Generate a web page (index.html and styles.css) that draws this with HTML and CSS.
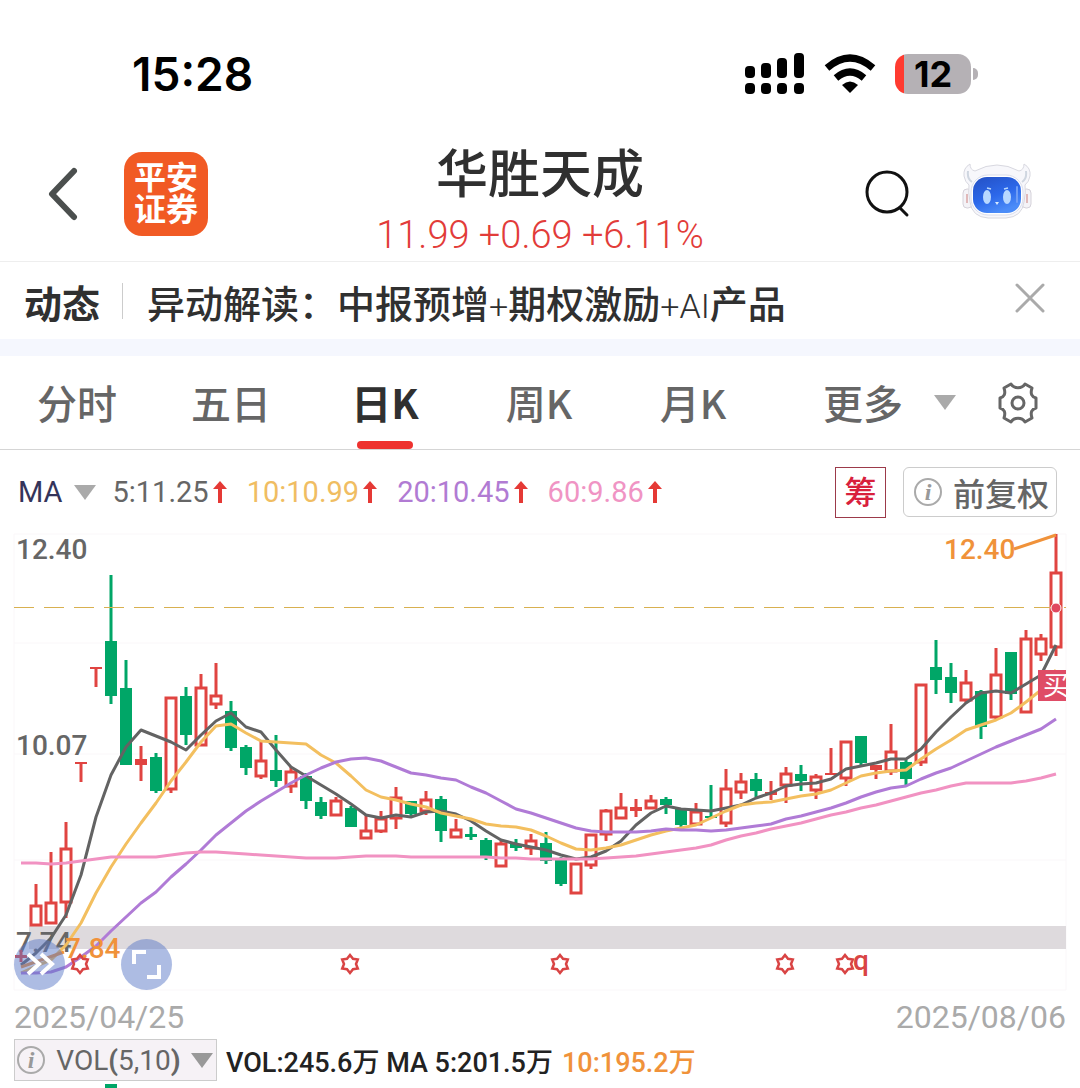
FILE: index.html
```html
<!DOCTYPE html>
<html lang="zh-CN">
<head>
  <meta charset="utf-8">
  <meta name="viewport" content="width=device-width, initial-scale=1">
  <title>华胜天成</title>
  <link rel="stylesheet" href="styles.css">
</head>
<body>
  <!-- Status bar -->
  <div class="status">
    <span class="time">15:28</span>
    <div class="status-icons">
      <svg class="signal" width="60" height="42" viewBox="0 0 60 42">
        <rect x="0" y="13" width="10" height="12" rx="4"/>
        <rect x="16" y="10" width="10" height="15" rx="4"/>
        <rect x="32" y="5" width="10" height="20" rx="4"/>
        <rect x="49" y="0" width="10" height="25" rx="4"/>
        <rect x="0" y="30" width="10" height="11" rx="4"/>
        <rect x="16" y="30" width="10" height="11" rx="4"/>
        <rect x="32" y="30" width="10" height="11" rx="4"/>
        <rect x="49" y="30" width="10" height="11" rx="4"/>
      </svg>
      <svg class="wifi" width="52" height="40" viewBox="0 0 52 40">
        <path d="M3 14Q26 -6 49 14" fill="none" stroke="#000" stroke-width="7"/>
        <path d="M12 24Q26 12 40 24" fill="none" stroke="#000" stroke-width="7"/>
        <path d="M18 31Q26 24 34 31L26 39Z"/>
      </svg>
      <div class="battery"><span>12</span></div>
    </div>
  </div>

  <!-- Header -->
  <header class="header">
    <div class="header-left">
      <button class="icon-btn" aria-label="返回">
        <svg width="30" height="54" viewBox="0 0 30 54"><path d="M26 4L4 27L26 50" fill="none" stroke="#4b4f4e" stroke-width="6" stroke-linecap="round" stroke-linejoin="round"/></svg>
      </button>
      <div class="logo"><span>平安</span><span>证券</span></div>
    </div>
    <div class="stock">
      <h1>华胜天成</h1>
      <p>11.99 +0.69 +6.11%</p>
    </div>
    <div class="header-right">
      <button class="icon-btn" aria-label="搜索">
        <svg width="46" height="50" viewBox="0 0 46 50"><circle cx="23" cy="23" r="20" fill="none" stroke="#111" stroke-width="3"/><path d="M36 39L43 46" stroke="#111" stroke-width="3" stroke-linecap="round"/></svg>
      </button>
      <button class="icon-btn robot" aria-label="智能助手">
        <svg width="70" height="58" viewBox="0 0 70 58">
          <defs>
            <linearGradient id="face" x1="0" y1="0" x2="0.5" y2="1"><stop offset="0" stop-color="#2450c4"/><stop offset="0.6" stop-color="#2c68ea"/><stop offset="1" stop-color="#4b8cf8"/></linearGradient>
          </defs>
          <rect x="1" y="27" width="9" height="19" rx="4" fill="#f4f3f7" stroke="#d5d2da"/>
          <rect x="60" y="27" width="9" height="19" rx="4" fill="#f4f3f7" stroke="#d5d2da"/>
          <path d="M5 32V41M65 32V41" stroke="#d9a5a5" stroke-width="1.5"/>
          <path d="M13 9Q8 8 8 2Q1 6 2 14Q3 20 7 23Q6 30 8 40Q10 55 26 56H44Q60 55 62 40Q64 30 63 23Q67 20 68 14Q69 6 62 2Q62 8 57 9Q35 -3 13 9Z" fill="#f7f7fb" stroke="#d8d8e0"/>
          <path d="M6 9Q5 17 10 20M64 9Q65 17 60 20" fill="none" stroke="#cfd6e0" stroke-width="2"/>
          <rect x="9" y="13" width="52" height="40" rx="17" fill="#fff" stroke="#d9dceb"/>
          <rect x="11" y="15" width="48" height="36" rx="14" fill="url(#face)"/>
          <ellipse cx="25" cy="35" rx="4" ry="7" fill="#b8d8ff"/>
          <ellipse cx="45" cy="35" rx="4" ry="7" fill="#b8d8ff"/>
          <path d="M25 26L29 27M42 27L46 26" stroke="#b8d8ff" stroke-width="1.5"/>
          <path d="M33 40H37L35 43Z" fill="#d8ebff"/>
          <path d="M55 25V40" stroke="#6f9df5" stroke-width="2" stroke-linecap="round"/>
        </svg>
      </button>
    </div>
  </header>

  <!-- News -->
  <div class="news">
    <strong>动态</strong>
    <span class="bar"></span>
    <a class="headline" href="#">异动解读：中报预增<span>+</span>期权激励<span>+AI</span>产品</a>
    <button class="icon-btn close" aria-label="关闭">
      <svg width="32" height="32" viewBox="0 0 32 32"><path d="M3 3L29 29M29 3L3 29" stroke="#aaa" stroke-width="3" stroke-linecap="round"/></svg>
    </button>
  </div>

  <!-- Period tabs -->
  <nav class="tabs">
    <button class="tab">分时</button>
    <button class="tab">五日</button>
    <button class="tab active">日K</button>
    <button class="tab">周K</button>
    <button class="tab">月K</button>
    <button class="more">更多<i class="caret"></i></button>
    <button class="icon-btn" aria-label="设置">
      <svg width="40" height="42" viewBox="0 0 40 42">
        <path d="M13 2C16 7 24 7 27 2L34 6C32 12 34 15 38 16V26C34 27 32 30 34 36L27 40C24 35 16 35 13 40L6 36C8 30 6 27 2 26V16C6 15 8 12 6 6Z" fill="none" stroke="#666" stroke-width="3" stroke-linejoin="round"/>
        <circle cx="20" cy="21" r="6" fill="none" stroke="#666" stroke-width="3"/>
      </svg>
    </button>
  </nav>

  <!-- MA values -->
  <div class="ma">
    <button class="ma-name">MA<i class="caret"></i></button>
    <span class="val ma5">5:11.25<svg class="up" width="14" height="22" viewBox="0 0 14 22"><path d="M7 0L14 8H9V22H5V8H0Z"/></svg></span>
    <span class="val ma10">10:10.99<svg class="up" width="14" height="22" viewBox="0 0 14 22"><path d="M7 0L14 8H9V22H5V8H0Z"/></svg></span>
    <span class="val ma20">20:10.45<svg class="up" width="14" height="22" viewBox="0 0 14 22"><path d="M7 0L14 8H9V22H5V8H0Z"/></svg></span>
    <span class="val ma60">60:9.86<svg class="up" width="14" height="22" viewBox="0 0 14 22"><path d="M7 0L14 8H9V22H5V8H0Z"/></svg></span>
    <button class="chip">筹</button>
    <button class="adjust">
      <svg width="30" height="30" viewBox="0 0 30 30"><circle cx="15" cy="15" r="13" fill="none" stroke="#aaa" stroke-width="2"/><text class="info" x="15" y="23" text-anchor="middle">i</text></svg>
      <span>前复权</span>
    </button>
  </div>

  <!-- K line chart -->
  <div class="chart">
    <svg class="kline" viewBox="0 520 1080 475">
      <path class="grid" d="M14 534H1066V990H14ZM14 643H1066M14 754H1066M14 860H1066"/>
      <rect x="29" y="926" width="1037" height="23" fill="#dedadd"/>
      <text class="axis" x="16" y="559">12.40</text>
      <text class="axis" x="16" y="755">10.07</text>
      <text class="axis" x="16" y="952">7.74</text>
      <g id="candles"></g>
      <path class="last" d="M14 607.5H1066"/>
      <g id="lines"></g>
      <path class="pointer" d="M1014 549L1056 535M21 967L64 952"/>
      <text class="mark" x="944" y="559">12.40</text>
      <text class="mark" x="65" y="958">7.84</text>
      <circle cx="1056" cy="608" r="5" fill="#e0485f" stroke="#fff"/>
      <svg x="1038" y="670" width="28" height="31">
        <rect width="28" height="31" fill="#df4c66"/>
        <text class="buy" x="5" y="25">买</text>
      </svg>
      <g id="stars"></g>
      <text class="q" x="853" y="970">q</text>
    </svg>
    <button class="round forward" aria-label="展开">
      <svg width="51" height="51" viewBox="0 0 51 51"><path d="M14 15L25 25L14 35M27 15L38 25L27 35" fill="none" stroke="#fff" stroke-width="4"/></svg>
    </button>
    <button class="round full" aria-label="全屏">
      <svg width="51" height="51" viewBox="0 0 51 51"><path d="M13 25V13H25M38 26V38H26" fill="none" stroke="#fff" stroke-width="4"/></svg>
    </button>
  </div>
  <div class="dates"><span>2025/04/25</span><span>2025/08/06</span></div>

  <!-- Volume -->
  <div class="vol">
    <button class="vol-name">
      <svg width="30" height="30" viewBox="0 0 30 30"><circle cx="15" cy="15" r="13" fill="none" stroke="#aaa" stroke-width="2"/><text class="info" x="15" y="23" text-anchor="middle">i</text></svg>
      <span>VOL<b>(</b>5,10<b>)</b></span>
      <i class="caret"></i>
    </button>
    <span class="vol-text">VOL:245.6万 MA 5:201.5万</span>
    <span class="vol-text orange">10:195.2万</span>
  </div>
  <svg class="kline" viewBox="0 0 1080 7"><rect x="105" y="3" width="12" height="4" fill="#00a667"/></svg>
  <script src="chart.js"></script>
</body>
</html>
```

FILE: styles.css
```css
*{
  box-sizing: border-box;
}
body{
  margin: 0;
  background-color: #fff;
  color: #303030;
  font-family: Roboto, "Noto Sans CJK SC", sans-serif;
  overflow-x: hidden;
}
button{
  background: none;
  border: none;
  padding: 0;
  margin: 0;
  color: inherit;
  font-family: inherit;
  cursor: pointer;
}
svg{
  display: block;
}
h1, p{
  margin: 0;
}
.icon-btn{
  flex: none;
}
.caret{
  display: inline-block;
  border: 11px solid transparent;
  border-top: 15px solid #aaa;
  border-bottom: none;
}

/* status bar */
.status{
  display: flex;
  justify-content: space-between;
  align-items: center;
  height: 132px;
  padding: 16px 109px 0 132px;
}
.time{
  color: #000;
  font-family: Inter, sans-serif;
  font-size: 46px;
  font-weight: 600;
}
.status-icons{
  display: flex;
  align-items: center;
  gap: 19px;
}
.battery{
  position: relative;
  width: 76px;
  height: 40px;
  border-radius: 13px;
  background: linear-gradient(to right, #ff3b30 9px, #b5b1b5 9px);
  color: #000;
  font-family: Inter, sans-serif;
  font-size: 36px;
  font-weight: 700;
  line-height: 40px;
  text-align: center;
}
.battery:after{
  content: "";
  position: absolute;
  right: -7px;
  top: 14px;
  width: 5px;
  height: 12px;
  border-radius: 0 5px 5px 0;
  background-color: #b5b1b5;
}

/* header */
.header{
  display: grid;
  grid-template-columns: 1fr auto 1fr;
  align-items: center;
  height: 130px;
  padding: 0 48px;
  border-bottom: 1px solid #eee;
}
.header-left, .header-right{
  display: flex;
  align-items: center;
  padding-bottom: 5px;
}
.header-left{
  gap: 46px;
}
.header-right{
  justify-content: flex-end;
  gap: 52px;
}
.robot{
  padding-bottom: 7px;
}
.logo{
  display: flex;
  flex-direction: column;
  justify-content: center;
  width: 84px;
  height: 84px;
  border-radius: 18px;
  background-color: #f15a24;
  color: #fff;
  font-size: 32px;
  font-weight: 700;
  line-height: 32px;
  text-align: center;
}
.stock{
  padding-top: 10px;
  text-align: center;
}
.stock h1{
  font-size: 52px;
  font-weight: 500;
  line-height: 66px;
}
.stock p{
  color: #e23c39;
  font-size: 38px;
  font-weight: 300;
  line-height: 52px;
}

/* news */
.news{
  display: flex;
  align-items: center;
  height: 94px;
  padding: 0 34px 0 24px;
  border-bottom: 17px solid #f5f7fe;
}
.news strong{
  padding-top: 8px;
  font-size: 38px;
  font-weight: 700;
  line-height: 38px;
}
.bar{
  width: 1px;
  height: 36px;
  margin: 0 24px 0 22px;
  background-color: #ccc;
}
.headline{
  flex: 1;
  padding-top: 10px;
  color: #303030;
  font-size: 38px;
  font-weight: 500;
  line-height: 60px;
  text-decoration: none;
  white-space: nowrap;
}
.headline span{
  font-size: 34px;
  font-weight: 300;
}
.close{
  padding-bottom: 6px;
}

/* tabs */
.tabs{
  display: flex;
  align-items: center;
  height: 94px;
  padding-right: 42px;
  border-bottom: 1px solid #d5d5d5;
}
.tab, .more{
  color: #666;
  font-size: 40px;
  font-weight: 500;
  line-height: 93px;
  font-family: "Noto Sans CJK SC", sans-serif;
}
.tab{
  position: relative;
  flex: 1;
}
.tab.active{
  color: #303030;
  font-weight: 700;
}
.tab.active:after{
  content: "";
  position: absolute;
  left: 50%;
  bottom: 0;
  width: 56px;
  height: 8px;
  margin-left: -28px;
  border-radius: 4px;
  background-color: #ee322f;
}
.more{
  display: flex;
  align-items: center;
  gap: 31px;
  padding: 0 42px 0 53px;
}

/* MA row */
.ma{
  display: flex;
  align-items: center;
  height: 70px;
  padding: 14px 23px 0 18px;
  white-space: nowrap;
}
.ma-name{
  display: flex;
  align-items: center;
  gap: 11px;
  margin-right: 17px;
  color: #34345a;
  font-size: 29px;
}
.val{
  display: flex;
  align-items: center;
  gap: 4px;
  margin-right: 20px;
  font-size: 29px;
  line-height: 48px;
}
.up{
  fill: #e53935;
}
.ma5{
  color: #666;
}
.ma10{
  color: #f0bd62;
}
.ma20{
  color: #b17bd3;
}
.ma60{
  color: #f094c4;
}
.chip{
  width: 51px;
  height: 51px;
  margin-left: auto;
  margin-right: 17px;
  border: 1px solid #9c3a4a;
  color: #d8203c;
  font-size: 32px;
  font-weight: 500;
  line-height: 50px;
}
.adjust{
  display: flex;
  align-items: center;
  gap: 10px;
  height: 50px;
  padding: 0 7px 0 9px;
  border: 1px solid #ccc;
  border-radius: 6px;
  color: #666;
  font-size: 32px;
  font-weight: 500;
}
.info{
  fill: #999;
  font-family: "Liberation Serif", serif;
  font-size: 24px;
  font-style: italic;
  font-weight: 700;
}

/* chart */
.chart{
  position: relative;
}
.kline{
  width: 100%;
  height: auto;
}
.grid{
  fill: none;
  stroke: #faf7f9;
}
.last{
  stroke: #d8b050;
  stroke-dasharray: 20 10;
}
.axis, .mark, .q{
  fill: #666;
  font-size: 28px;
  font-weight: 500;
}
.mark{
  fill: #f0923a;
}
.pointer{
  stroke: #f0923a;
  stroke-width: 3;
}
.buy{
  fill: #fff;
  font-size: 26px;
}
.q{
  fill: #d94444;
}
.round{
  position: absolute;
  bottom: 5px;
  width: 51px;
  height: 51px;
  border-radius: 50%;
  background-color: rgba(91, 122, 200, 0.5);
}
.forward{
  left: 14px;
}
.full{
  left: 121px;
}
.dates{
  display: flex;
  justify-content: space-between;
  padding: 0 14px;
  color: #aaa;
  font-size: 32px;
  line-height: 44px;
}

/* volume */
.vol{
  display: flex;
  align-items: center;
  gap: 9px;
  height: 42px;
  padding-left: 14px;
  white-space: nowrap;
}
.vol-name{
  display: flex;
  align-items: center;
  justify-content: space-between;
  width: 203px;
  height: 42px;
  padding: 0 3px 0 1px;
  border: 1px solid #ccc;
  background-color: #f6f2f6;
  color: #666;
  font-size: 28px;
}
.vol-name .caret{
  border-top-color: #999;
}
.vol-text{
  color: #222;
  font-size: 27px;
  font-weight: 500;
}
.orange{
  color: #f0923a;
}
```

FILE: chart.js
```js
// one row per day: colour, high, body top, body bottom, low
var days = [
  ["r",950,955,958,962],["r",884,905,926,926],["r",852,902,924,924],["r",822,848,903,918],["t",763,763,763,782],
  ["t",668,668,668,687],["g",575,641,696,704],["g",660,688,765,765],["r",746,759,765,781],["g",753,757,791,793],
  ["r",697,697,790,793],["g",687,696,735,745],["r",674,687,746,746],["r",663,695,705,709],["g",701,711,748,751],
  ["g",745,747,768,775],["r",741,760,777,779],["g",735,770,781,787],["r",767,771,787,793],["g",773,776,801,809],
  ["g",797,802,816,819],["r",797,800,816,816],["g",806,808,827,827],["r",814,830,839,839],["r",811,818,832,833],
  ["r",787,797,819,829],["g",801,801,814,818],["r",791,799,812,815],["g",796,799,831,842],["r",819,829,838,838],
  ["g",827,834,837,840],["g",838,840,858,860],["r",841,843,867,867],["g",839,844,848,851],["r",834,840,849,855],
  ["g",832,843,861,864],["g",857,860,884,886],["r",863,863,894,894],["r",834,834,866,869],["r",809,810,835,841],
  ["r",793,807,819,819],["r",799,807,811,817],["r",795,800,809,809],["g",797,799,805,814],["g",809,809,825,828],
  ["r",803,811,825,825],["g",785,816,818,818],["r",769,788,824,827],["r",773,781,793,799],["g",773,779,791,797],
  ["r",781,792,795,800],["r",767,773,786,803],["g",765,774,781,791],["r",774,776,791,799],["t",748,774,775,775],
  ["r",741,741,779,786],["g",736,736,763,766],["r",765,765,770,779],["r",724,751,772,775],["g",760,762,779,785],
  ["r",684,684,763,766],["g",640,667,680,694],["g",663,677,693,703],["r",670,682,701,703],["g",690,691,727,739],
  ["r",648,674,718,719],["g",652,652,694,700],["r",630,638,713,713],["r",634,638,655,661],["r",534,572,648,656]
];
var averages = {
  "#636363": [965,953,938,915,875,817,775,747,730,736,742,750,735,721,713,727,732,750,767,776,785,794,804,815,818,815,817,812,811,814,821,831,840,844,847,850,855,859,857,851,841,825,813,806,809,810,811,808,805,798,793,786,784,783,779,769,766,763,759,759,749,732,717,703,693,691,693,684,675,645],
  "#f3bf5f": [973,966,960,945,923,893,867,844,823,803,781,762,742,726,724,733,741,742,743,744,755,763,776,790,797,800,804,807,813,816,819,824,826,827,830,836,843,849,850,848,845,840,835,831,828,825,818,811,805,803,802,799,796,794,790,783,776,773,771,770,759,749,740,730,725,720,713,702,690,670],
  "#b07bd6": [973,973,972,967,957,946,931,917,903,892,877,864,850,835,823,811,801,792,783,775,768,762,759,758,761,767,773,775,778,780,787,793,801,809,813,818,823,828,831,832,832,832,831,829,830,830,831,830,828,826,824,819,816,812,808,803,797,792,788,786,779,773,768,761,754,747,741,735,729,719],
  "#f192c2": [863,863,864,863,861,859,857,857,857,857,855,853,852,852,853,854,855,856,857,858,858,858,857,856,856,856,857,857,857,857,857,857,858,858,859,859,859,859,859,858,857,856,854,852,850,848,845,840,836,833,829,826,823,819,815,812,808,805,801,797,793,790,786,783,783,783,783,781,778,774]
};
var RED = "#e04441", GREEN = "#00a667";

function add(id, tag, attrs) {
  var el = document.createElementNS("http://www.w3.org/2000/svg", tag);
  for (var k in attrs) {
    el.setAttribute(k, attrs[k]);
  }
  document.getElementById(id).appendChild(el);
}

days.forEach(function (d, i) {
  var x = 21 + i * 15, color = d[0] == "g" ? GREEN : RED;
  var high = d[1], top = d[2], bottom = d[3], low = d[4];
  // wick
  add("candles", "path", { d: "M" + x + " " + high + "V" + top + "M" + x + " " + bottom + "V" + low, stroke: color, "stroke-width": 3 });
  if (d[0] == "t") {
    // open and close are the same
    add("candles", "path", { d: "M" + (x - 6) + " " + top + "H" + (x + 6), stroke: color, "stroke-width": 2 });
  } else if (d[0] == "g" || bottom - top < 7) {
    add("candles", "rect", { x: x - 6, y: top, width: 12, height: bottom - top, fill: color });
  } else {
    add("candles", "rect", { x: x - 5, y: top + 1, width: 10, height: bottom - top - 2, fill: "#fff", stroke: color, "stroke-width": 3 });
  }
});

for (var color in averages) {
  var points = averages[color].map(function (y, i) { return (21 + i * 15) + "," + y; }).join(" ");
  add("lines", "polyline", { points: points, fill: "none", stroke: color, "stroke-width": 3, "stroke-linejoin": "round" });
}

// event markers
[80, 350, 560, 785, 845].forEach(function (x) {
  var p = [];
  for (var n = 0; n < 12; n++) {
    var r = n % 2 ? 6 : 9, a = n * Math.PI / 6;
    p.push((x + r * Math.sin(a)).toFixed(1) + "," + (964 - r * Math.cos(a)).toFixed(1));
  }
  add("stars", "polygon", { points: p.join(" "), fill: "none", stroke: "#d94444", "stroke-width": 2.5 });
});
```
